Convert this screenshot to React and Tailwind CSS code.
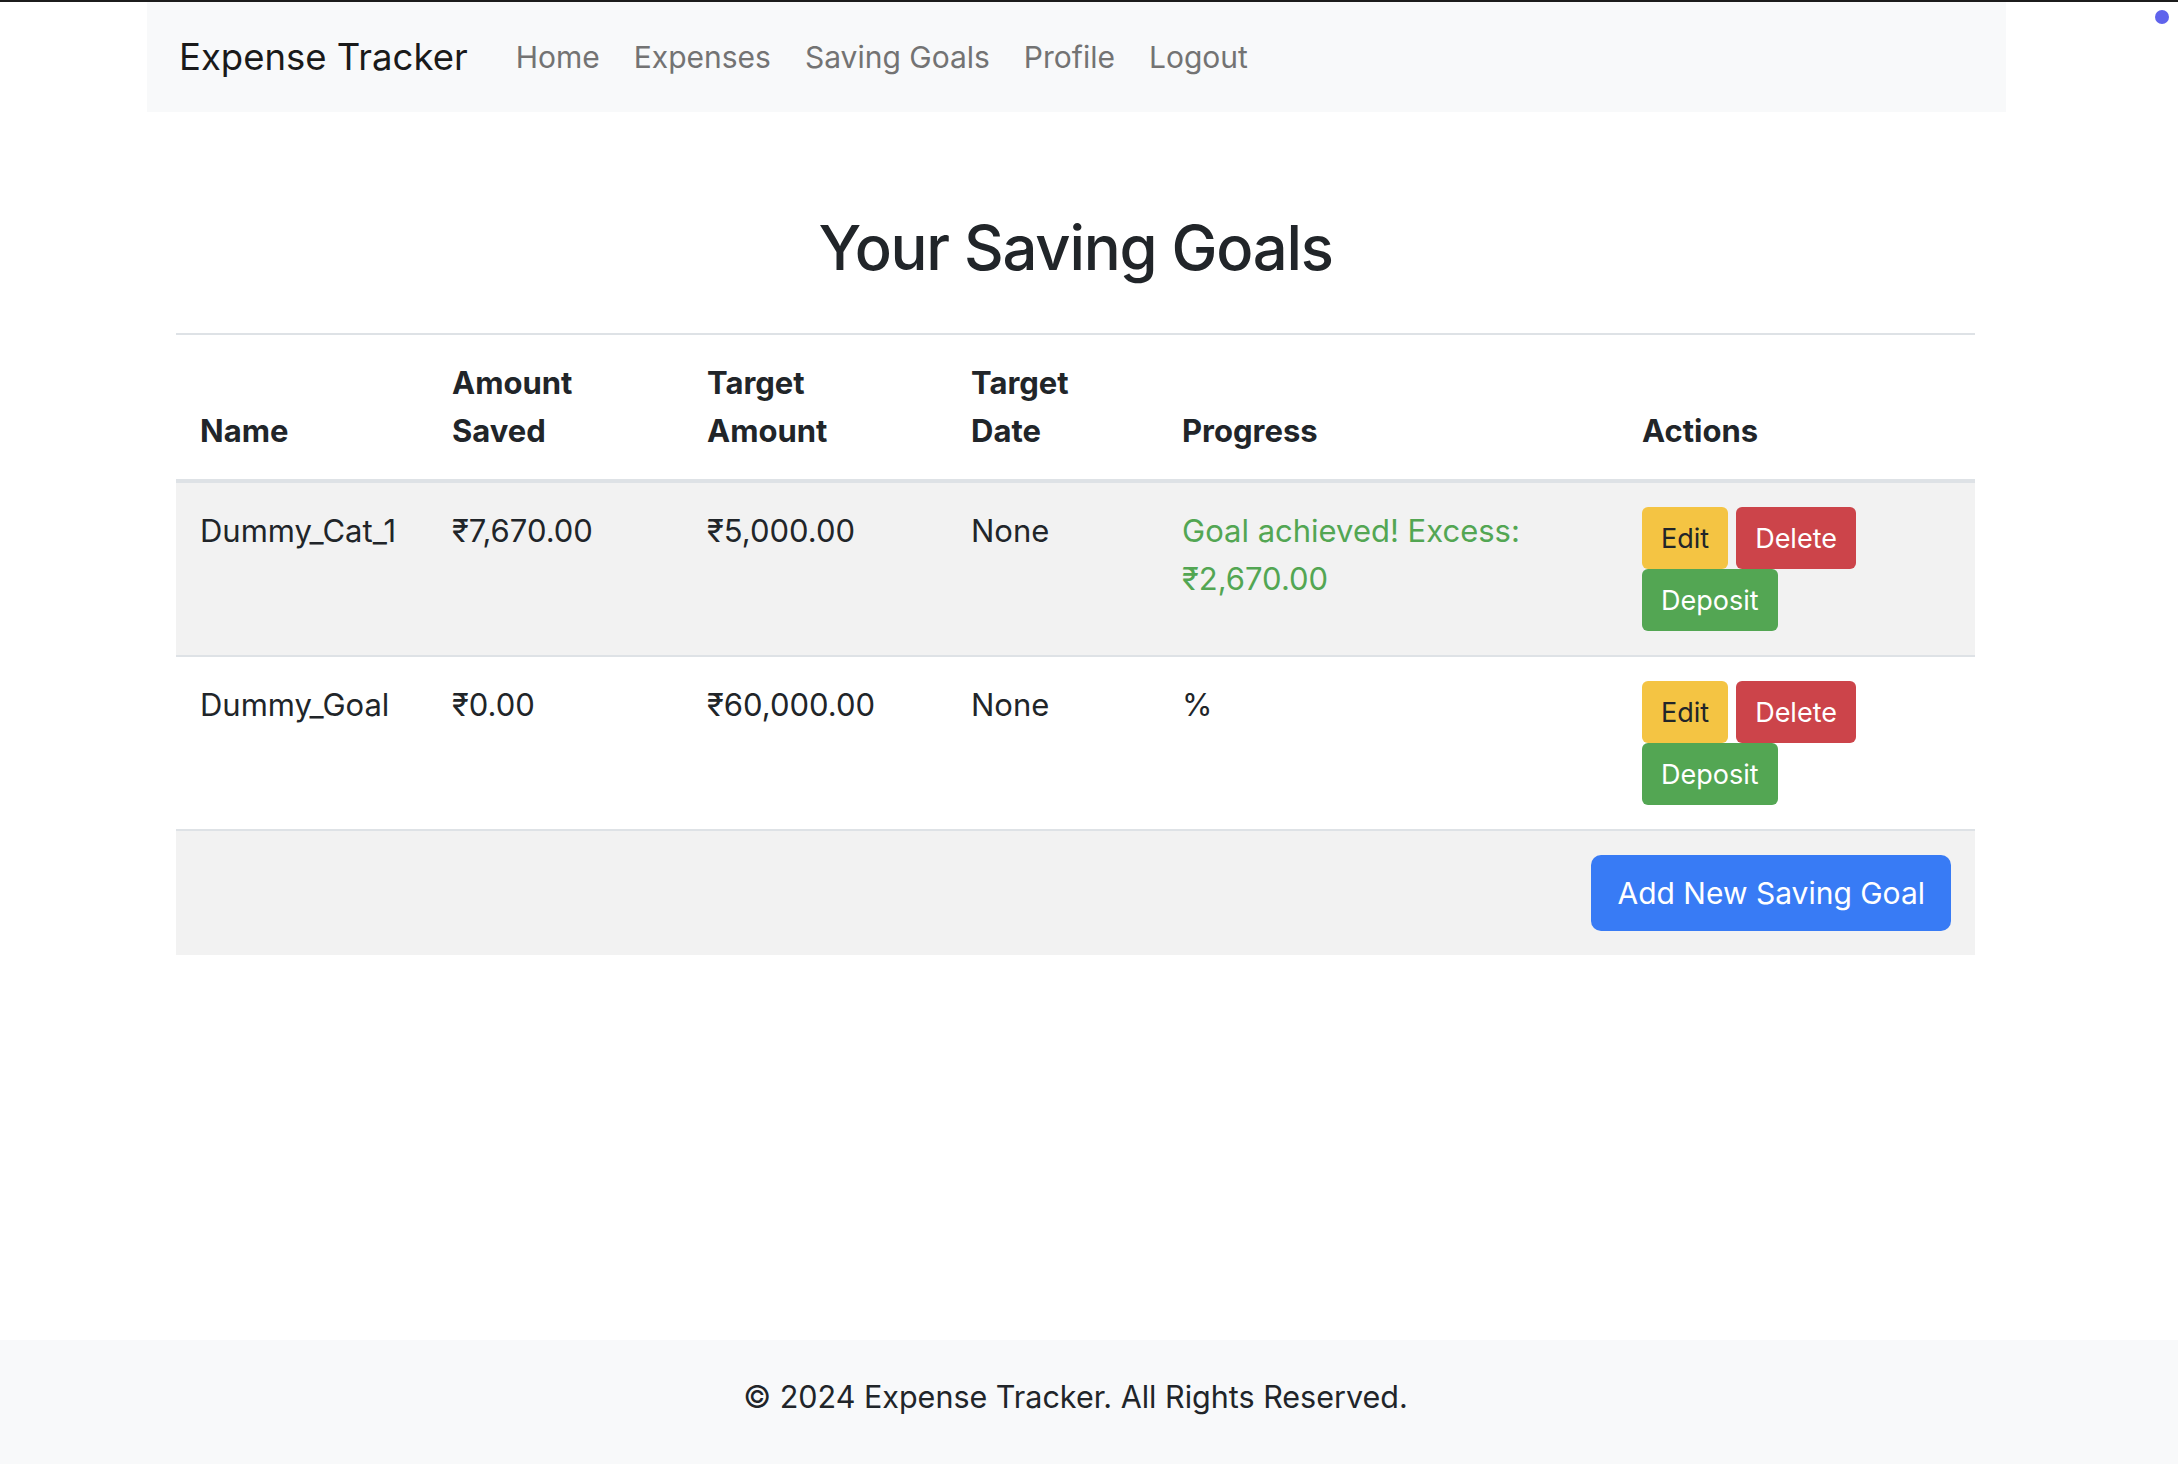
const GOALS = [
  { name: 'Dummy_Cat_1', saved: '₹7,670.00', target: '₹5,000.00', date: 'None', progress: 'Goal achieved! Excess: ₹2,670.00', done: true },
  { name: 'Dummy_Goal', saved: '₹0.00', target: '₹60,000.00', date: 'None', progress: '%', done: false },
]

const LINKS = ['Home', 'Expenses', 'Saving Goals', 'Profile', 'Logout']

function Btn({ children, className }) {
  return (
    <button className={`h-[62px] px-[19px] rounded-[6px] text-[27px] leading-none flex items-center ${className}`}>
      {children}
    </button>
  )
}

export default function App() {
  return (
    <div className="relative min-h-screen flex flex-col bg-white text-[#212529] font-[Inter,sans-serif] border-t-2 border-[#1c1c1c]">
      <span className="absolute top-[8px] left-[2155px] w-[14px] h-[14px] rounded-full bg-[#5f63ec]" />

      <nav className="ml-[147px] w-[1859px] h-[110px] bg-[#f8f9fa] flex items-center pl-[32px]">
        <span className="text-[36.5px] text-[#1a1a1a] mr-[31px]">Expense Tracker</span>
        {LINKS.map(l => (
          <a key={l} className="px-[17px] text-[30px] text-[#737373]">{l}</a>
        ))}
      </nav>

      <main className="ml-[176px] w-[1799px]">
        <h1 className="pt-[100px] mb-[49px] text-center text-[61.5px] leading-[72px] font-medium tracking-[-0.02em]">Your Saving Goals</h1>

        <table className="w-full table-fixed border-separate border-spacing-0 text-[31px] leading-[48px]">
          <colgroup>
            <col className="w-[252px]" />
            <col className="w-[255px]" />
            <col className="w-[264px]" />
            <col className="w-[211px]" />
            <col className="w-[460px]" />
            <col className="w-[357px]" />
          </colgroup>
          <thead>
            <tr className="text-left align-bottom">
              {['Name', 'Amount|Saved', 'Target|Amount', 'Target|Date', 'Progress', 'Actions'].map(h => (
                <th key={h} className="p-[24px] font-bold border-t-2 border-b-4 border-[#dee2e6]">
                  {h.split('|').map((p, i) => <div key={i}>{p}</div>)}
                </th>
              ))}
            </tr>
          </thead>
          <tbody>
            {GOALS.map((g, i) => {
              const bg = i % 2 === 0 ? 'bg-[#f2f2f2]' : 'bg-white'
              const td = `p-[24px] align-top border-b-2 border-[#dee2e6] ${bg}`
              return (
                <tr key={g.name}>
                  <td className={td}>{g.name}</td>
                  <td className={td}>{g.saved}</td>
                  <td className={td}>{g.target}</td>
                  <td className={td}>{g.date}</td>
                  <td className={`${td} ${g.done ? 'text-[#53a653]' : ''}`}>{g.progress}</td>
                  <td className={td}>
                    <div className="flex flex-wrap gap-x-[8px]">
                      <Btn className="bg-[#f4c443] text-[#212529]">Edit</Btn>
                      <Btn className="bg-[#cc444a] text-white">Delete</Btn>
                      <Btn className="bg-[#53a653] text-white">Deposit</Btn>
                    </div>
                  </td>
                </tr>
              )
            })}
          </tbody>
          <tfoot>
            <tr>
              <td colSpan={6} className="p-[24px] bg-[#f2f2f2]">
                <div className="flex justify-end">
                  <button className="h-[76px] px-[26px] rounded-[10px] bg-[#387bf5] text-white text-[30px]">
                    Add New Saving Goal
                  </button>
                </div>
              </td>
            </tr>
          </tfoot>
        </table>
      </main>

      <footer className="mt-auto h-[124px] bg-[#f8f9fa] pt-[33px]">
        <p className="ml-[176px] w-[1799px] text-center text-[30.5px] leading-[48px]">
          © 2024 Expense Tracker. All Rights Reserved.
        </p>
      </footer>
    </div>
  )
}
